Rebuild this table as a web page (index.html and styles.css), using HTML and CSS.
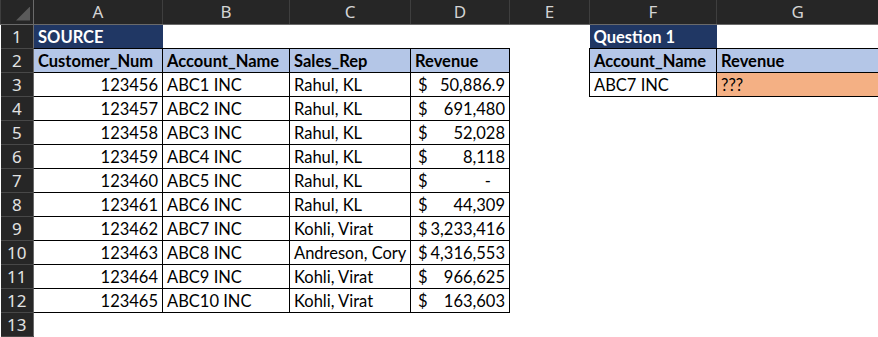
FILE: index.html
```html
<!DOCTYPE html>
<html lang="en">

<head>
  <meta charset="UTF-8" />
  <meta name="viewport" content="width=device-width, initial-scale=1.0" />
  <title>Revenue Lookup</title>
  <link rel="stylesheet" href="styles.css">
</head>

<body>
  <table class="sheet">
    <colgroup>
      <col class="w-row">
      <col class="w-a">
      <col class="w-b">
      <col class="w-c">
      <col class="w-d">
      <col class="w-e">
      <col class="w-f">
      <col class="w-g">
    </colgroup>
    <thead>
      <tr class="col-heads">
        <th class="corner"><span class="tri"></span></th>
        <th>A</th>
        <th>B</th>
        <th>C</th>
        <th>D</th>
        <th>E</th>
        <th>F</th>
        <th>G</th>
      </tr>
    </thead>
    <tbody>
      <tr>
        <th>1</th>
        <td class="title">SOURCE</td>
        <td></td><td></td><td></td><td></td>
        <td class="title">Question 1</td>
        <td></td>
      </tr>
      <tr>
        <th>2</th>
        <td class="head">Customer_Num</td>
        <td class="head">Account_Name</td>
        <td class="head">Sales_Rep</td>
        <td class="head">Revenue</td>
        <td></td>
        <td class="head">Account_Name</td>
        <td class="head">Revenue</td>
      </tr>
      <tr>
        <th>3</th>
        <td class="box num">123456</td>
        <td class="box">ABC1 INC</td>
        <td class="box">Rahul, KL</td>
        <td class="box"><div class="money"><span>$</span><span>50,886.9</span></div></td>
        <td></td>
        <td class="box">ABC7 INC</td>
        <td class="box answer">???</td>
      </tr>
      <tr>
        <th>4</th>
        <td class="box num">123457</td>
        <td class="box">ABC2 INC</td>
        <td class="box">Rahul, KL</td>
        <td class="box"><div class="money"><span>$</span><span>691,480</span></div></td>
        <td></td><td></td><td></td>
      </tr>
      <tr>
        <th>5</th>
        <td class="box num">123458</td>
        <td class="box">ABC3 INC</td>
        <td class="box">Rahul, KL</td>
        <td class="box"><div class="money"><span>$</span><span>52,028</span></div></td>
        <td></td><td></td><td></td>
      </tr>
      <tr>
        <th>6</th>
        <td class="box num">123459</td>
        <td class="box">ABC4 INC</td>
        <td class="box">Rahul, KL</td>
        <td class="box"><div class="money"><span>$</span><span>8,118</span></div></td>
        <td></td><td></td><td></td>
      </tr>
      <tr>
        <th>7</th>
        <td class="box num">123460</td>
        <td class="box">ABC5 INC</td>
        <td class="box">Rahul, KL</td>
        <td class="box"><div class="money"><span>$</span><span class="zero">-</span></div></td>
        <td></td><td></td><td></td>
      </tr>
      <tr>
        <th>8</th>
        <td class="box num">123461</td>
        <td class="box">ABC6 INC</td>
        <td class="box">Rahul, KL</td>
        <td class="box"><div class="money"><span>$</span><span>44,309</span></div></td>
        <td></td><td></td><td></td>
      </tr>
      <tr>
        <th>9</th>
        <td class="box num">123462</td>
        <td class="box">ABC7 INC</td>
        <td class="box">Kohli, Virat</td>
        <td class="box"><div class="money"><span>$</span><span>3,233,416</span></div></td>
        <td></td><td></td><td></td>
      </tr>
      <tr>
        <th>10</th>
        <td class="box num">123463</td>
        <td class="box">ABC8 INC</td>
        <td class="box">Andreson, Cory</td>
        <td class="box"><div class="money"><span>$</span><span>4,316,553</span></div></td>
        <td></td><td></td><td></td>
      </tr>
      <tr>
        <th>11</th>
        <td class="box num">123464</td>
        <td class="box">ABC9 INC</td>
        <td class="box">Kohli, Virat</td>
        <td class="box"><div class="money"><span>$</span><span>966,625</span></div></td>
        <td></td><td></td><td></td>
      </tr>
      <tr>
        <th>12</th>
        <td class="box num">123465</td>
        <td class="box">ABC10 INC</td>
        <td class="box">Kohli, Virat</td>
        <td class="box"><div class="money"><span>$</span><span>163,603</span></div></td>
        <td></td><td></td><td></td>
      </tr>
      <tr>
        <th>13</th>
        <td></td><td></td><td></td><td></td><td></td><td></td><td></td>
      </tr>
    </tbody>
  </table>
</body>

</html>
```

FILE: styles.css
```css
* {
  box-sizing: border-box;
}

body {
  margin: 0;
  background: #fff;
  overflow: hidden;
}

.sheet {
  border-collapse: collapse;
  table-layout: fixed;
  width: 878px;
  font-family: Lato, "Liberation Sans", sans-serif;
  font-size: 16.5px;
  color: #000;
}

.w-row { width: 33px; }
.w-a { width: 129px; }
.w-b { width: 127px; }
.w-c { width: 121px; }
.w-d { width: 99px; }
.w-e { width: 80px; }
.w-f { width: 127px; }
.w-g { width: 162px; }

tr {
  height: 24px;
}

td {
  padding: 1px 4px 0;
  white-space: nowrap;
  overflow: hidden;
  vertical-align: middle;
}

/* column letters and row numbers */
.col-heads th {
  background: #262626;
  color: #d4d4d4;
  font-family: "Noto Sans", sans-serif;
  font-weight: 400;
  font-size: 17px;
  border-left: 1px solid #3e3e3e;
  border-bottom: 1px solid #6a6a6a;
  padding: 0;
}

.col-heads th.corner {
  position: relative;
  border-right: 1px solid #6a6a6a;
}

.tri {
  position: absolute;
  right: 3px;
  bottom: 3px;
  width: 14px;
  height: 14px;
  background: #5a5a5a;
  clip-path: polygon(100% 0, 100% 100%, 0 100%);
}

tbody th {
  background: #262626;
  color: #e2e2e2;
  font-family: "Noto Sans", sans-serif;
  font-weight: 400;
  font-size: 17px;
  padding: 0;
  border-right: 1px solid #6a6a6a;
  border-bottom: 1px solid #484848;
}

/* cell styles */
.title {
  background: #203764;
  color: #fff;
  font-weight: 700;
}

.head {
  background: #b4c6e7;
  font-weight: 700;
  border: 1px solid #000;
}

.box {
  border: 1px solid #000;
}

.num {
  text-align: right;
}

.answer {
  background: #f4b084;
}

.money {
  display: flex;
  justify-content: space-between;
  padding-left: 3px;
}

.money .zero {
  padding-right: 14px;
}
```
